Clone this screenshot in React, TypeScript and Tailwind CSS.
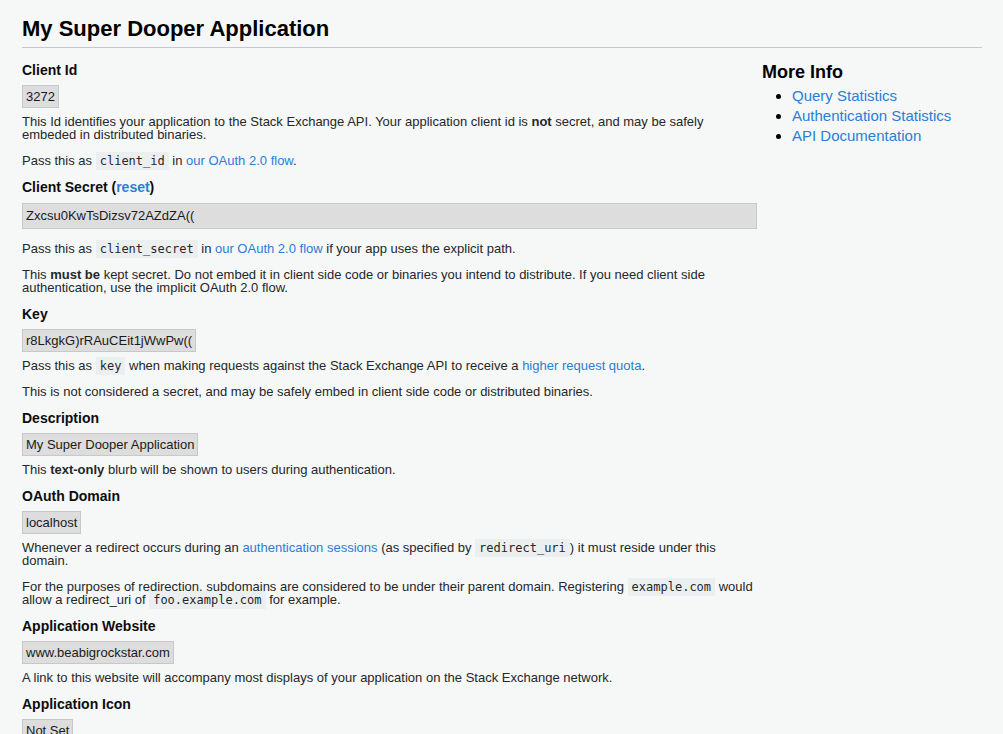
import type { ReactNode } from 'react';

const font = { fontFamily: '"Liberation Sans", Arial, sans-serif' };

function Label({ children, first }: { children: ReactNode; first?: boolean }) {
  return (
    <h3
      className={`${first ? 'mt-[14px]' : 'mt-[12px]'} text-[14px] font-bold leading-[17px] text-[#0c0d0e]`}
    >
      {children}
    </h3>
  );
}

function Value({ children }: { children: ReactNode }) {
  return (
    <div className="mt-[6px] flex">
      <span className="block border border-[#c8c8c8] bg-[#dddddd] px-[3px] py-[3px] text-[13px] leading-[15px] text-[#1a1a1a]">
        {children}
      </span>
    </div>
  );
}

function P({ children, afterBox }: { children: ReactNode; afterBox?: boolean }) {
  return (
    <p className={`${afterBox ? 'mt-[7px]' : 'mt-[13px]'} text-[13px] leading-[13px] text-[#242729]`}>
      {children}
    </p>
  );
}

function Code({ children }: { children: ReactNode }) {
  return (
    <code className="bg-[#eceff0] px-1 py-[2px] font-['DejaVu_Sans_Mono',monospace] text-[12px] leading-none text-[#242729]">
      {children}
    </code>
  );
}

function A({ children }: { children: ReactNode }) {
  return (
    <a href="#" className="text-[#2a7ed6]">
      {children}
    </a>
  );
}

export default function App() {
  return (
    <div className="min-h-screen bg-[#f6f7f7] pl-[22px]" style={font}>
      <div className="w-[960px]">
        <h1 className="border-b border-[#c4c8d0] pt-[16px] pb-[5px] text-[22px] font-bold leading-[26px] text-black">
          My Super Dooper Application
        </h1>

        <div className="flex">
          <main className="w-[735px] pb-10">
            <Label first>Client Id</Label>
            <Value>3272</Value>
            <P afterBox>
              This Id identifies your application to the Stack Exchange API. Your application client id is{' '}
              <b>not</b> secret, and may be safely embeded in distributed binaries.
            </P>
            <P>
              Pass this as <Code>client_id</Code> in <A>our OAuth 2.0 flow</A>.
            </P>

            <Label>
              Client Secret (<a href="#" className="text-[#2a7ed6]">reset</a>)
            </Label>
            <div className="mt-[7px] flex h-[26px] items-center border border-[#c8c8c8] bg-[#dddddd] px-[3px] text-[13px] text-[#1a1a1a]">
              Zxcsu0KwTsDizsv72AZdZA((
            </div>
            <P>
              Pass this as <Code>client_secret</Code> in <A>our OAuth 2.0 flow</A> if your app uses the explicit path.
            </P>
            <P>
              This <b>must be</b> kept secret. Do not embed it in client side code or binaries you intend to
              distribute. If you need client side authentication, use the implicit OAuth 2.0 flow.
            </P>

            <Label>Key</Label>
            <Value>r8LkgkG)rRAuCEit1jWwPw((</Value>
            <P afterBox>
              Pass this as <Code>key</Code> when making requests against the Stack Exchange API to receive a{' '}
              <A>higher request quota</A>.
            </P>
            <P>This is not considered a secret, and may be safely embed in client side code or distributed binaries.</P>

            <Label>Description</Label>
            <Value>My Super Dooper Application</Value>
            <P afterBox>
              This <b>text-only</b> blurb will be shown to users during authentication.
            </P>

            <Label>OAuth Domain</Label>
            <Value>localhost</Value>
            <P afterBox>
              Whenever a redirect occurs during an <A>authentication sessions</A> (as specified by{' '}
              <Code>redirect_uri</Code>) it must reside under this domain.
            </P>
            <P>
              For the purposes of redirection, subdomains are considered to be under their parent domain. Registering{' '}
              <Code>example.com</Code> would allow a redirect_uri of <Code>foo.example.com</Code> for example.
            </P>

            <Label>Application Website</Label>
            <Value>www.beabigrockstar.com</Value>
            <P afterBox>
              A link to this website will accompany most displays of your application on the Stack Exchange network.
            </P>

            <Label>Application Icon</Label>
            <Value>Not Set</Value>
          </main>

          <aside className="ml-[5px] w-[220px]">
            <h2 className="mt-[13px] text-[18px] font-bold leading-[22px] text-black">More Info</h2>
            <ul className="mt-[3px] list-disc pl-[30px] text-[15px] leading-[20px] text-black">
              <li>
                <A>Query Statistics</A>
              </li>
              <li>
                <A>Authentication Statistics</A>
              </li>
              <li>
                <A>API Documentation</A>
              </li>
            </ul>
          </aside>
        </div>
      </div>
    </div>
  );
}
